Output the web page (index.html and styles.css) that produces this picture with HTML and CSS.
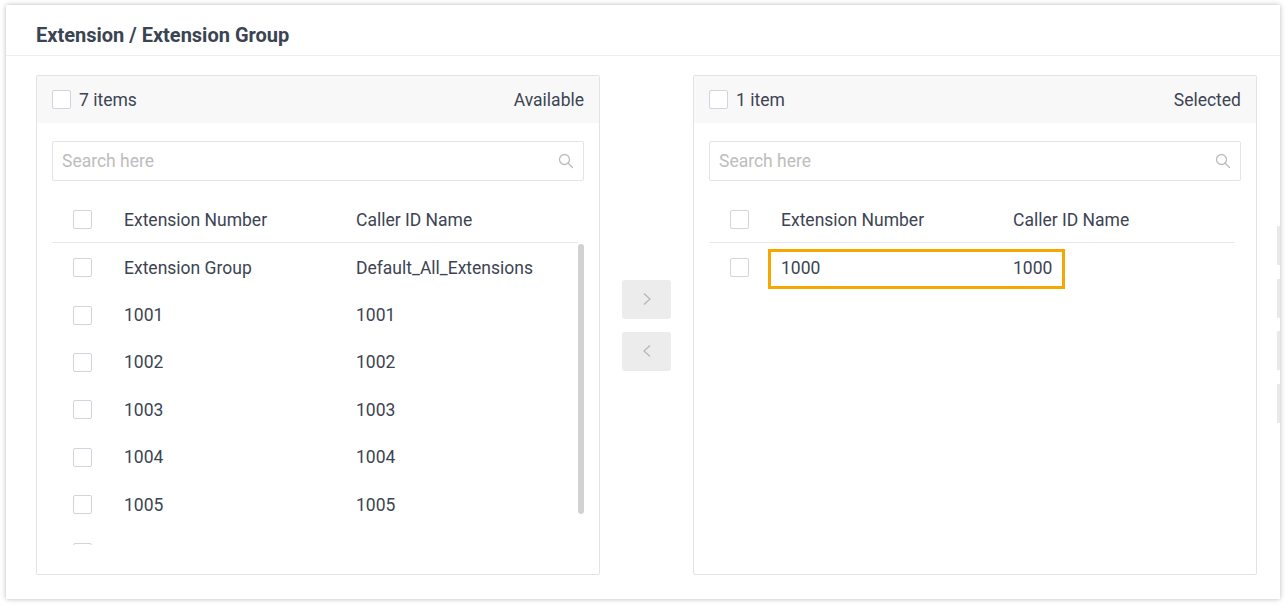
FILE: index.html
```html
<!DOCTYPE html>
<html>
<head>
<meta charset="utf-8">
<link rel="stylesheet" href="styles.css">
</head>
<body>
<div class="card">
  <div class="card-head">Extension / Extension Group</div>
  <div class="card-body">
    <div class="panel">
      <div class="panel-head">
        <span class="cb"></span><span class="count">7 items</span><span class="spacer"></span><span>Available</span>
      </div>
      <div class="search"><span class="ph">Search here</span>
        <svg class="sicon" width="16" height="16" viewBox="0 0 16 16"><circle cx="6.5" cy="6.5" r="5" fill="none" stroke="#bdbdbd" stroke-width="1.3"/><path d="M10.2 10.2 L14.5 14.5" stroke="#bdbdbd" stroke-width="1.3" stroke-linecap="round"/></svg>
      </div>
      <div class="table">
        <div class="thead"><span class="cell-cb"><span class="cb"></span></span><span class="c1">Extension Number</span><span class="c2">Caller ID Name</span></div>
        <div class="tbody">
          <div class="rows">
            <div class="row"><span class="cell-cb"><span class="cb"></span></span><span class="c1">Extension Group</span><span class="c2">Default_All_Extensions</span></div>
            <div class="row"><span class="cell-cb"><span class="cb"></span></span><span class="c1">1001</span><span class="c2">1001</span></div>
            <div class="row"><span class="cell-cb"><span class="cb"></span></span><span class="c1">1002</span><span class="c2">1002</span></div>
            <div class="row"><span class="cell-cb"><span class="cb"></span></span><span class="c1">1003</span><span class="c2">1003</span></div>
            <div class="row"><span class="cell-cb"><span class="cb"></span></span><span class="c1">1004</span><span class="c2">1004</span></div>
            <div class="row"><span class="cell-cb"><span class="cb"></span></span><span class="c1">1005</span><span class="c2">1005</span></div>
            <div class="row"><span class="cell-cb"><span class="cb"></span></span></div>
          </div>
          <div class="track"><div class="thumb"></div></div>
        </div>
      </div>
    </div>
    <div class="ops">
      <div class="btn"><svg width="10" height="14" viewBox="0 0 10 14"><path d="M2 1.5 L8 7 L2 12.5" fill="none" stroke="#b5b5b5" stroke-width="1.2"/></svg></div>
      <div class="btn"><svg width="10" height="14" viewBox="0 0 10 14"><path d="M8 1.5 L2 7 L8 12.5" fill="none" stroke="#b5b5b5" stroke-width="1.2"/></svg></div>
    </div>
    <div class="panel">
      <div class="panel-head">
        <span class="cb"></span><span class="count">1 item</span><span class="spacer"></span><span>Selected</span>
      </div>
      <div class="search"><span class="ph">Search here</span>
        <svg class="sicon" width="16" height="16" viewBox="0 0 16 16"><circle cx="6.5" cy="6.5" r="5" fill="none" stroke="#bdbdbd" stroke-width="1.3"/><path d="M10.2 10.2 L14.5 14.5" stroke="#bdbdbd" stroke-width="1.3" stroke-linecap="round"/></svg>
      </div>
      <div class="table">
        <div class="thead"><span class="cell-cb"><span class="cb"></span></span><span class="c1">Extension Number</span><span class="c2">Caller ID Name</span></div>
        <div class="tbody">
          <div class="rows">
            <div class="row hl-row"><span class="cell-cb"><span class="cb"></span></span><span class="c1">1000</span><span class="c2">1000</span><span class="highlight"></span></div>
          </div>
          <div class="track"></div>
        </div>
      </div>
    </div>
  </div>
  <div class="edge">
    <span class="edge-bar b1"></span>
    <span class="edge-bar b2"></span>
    <span class="edge-bar b3"></span>
    <span class="edge-bar b4"></span>
  </div>
</div>
</body>
</html>
```
FILE: styles.css
```css
* { box-sizing: border-box; }
html, body { margin: 0; padding: 0; background: #ffffff; }
body {
  font-family: Roboto, "Liberation Sans", Arial, sans-serif;
  color: #3c4453;
  width: 1286px;
  height: 606px;
  overflow: hidden;
  padding: 5px 6px 0 6px;
}
.card {
  position: relative;
  width: 1274px;
  height: 594px;
  background: #fff;
  box-shadow: 0 0 5px rgba(0,0,0,0.28);
}
.card-head {
  height: 51px;
  padding: 18px 0 0 30px;
  font-size: 20px;
  font-weight: 700;
  color: #3a4453;
  border-bottom: 1px solid #eeeeee;
  line-height: 24px;
}
.card-body {
  display: flex;
  align-items: center;
  padding: 19px 23px 0 30px;
}
.panel {
  width: 564px;
  height: 500px;
  border: 1px solid #e3e3e3;
  border-radius: 2px;
  display: flex;
  flex-direction: column;
}
.panel-head {
  height: 47px;
  background: #f8f8f8;
  display: flex;
  align-items: center;
  padding: 0 15px;
  font-size: 17.5px;
  color: #3c4453;
}
.panel-head .count { margin-left: 8px; }
.spacer { flex: 1; }
.cb {
  display: inline-block;
  width: 19px;
  height: 19px;
  border: 1px solid #d3d3de;
  border-radius: 2px;
  background: #fff;
}
.search {
  margin: 18px 15px 0 15px;
  height: 40px;
  border: 1px solid #e4e4e8;
  border-radius: 2px;
  display: flex;
  align-items: center;
  padding: 0 10px 0 9px;
  font-size: 17.5px;
}
.search .ph { flex: 1; color: #bdbdbd; }
.sicon { margin-right: -1px; }
.table {
  margin: 14px 15px 0 15px;
  flex: 1;
  display: flex;
  flex-direction: column;
  min-height: 0;
}
.thead {
  height: 48px;
  padding-top: 2px;
  display: flex;
  align-items: center;
  border-bottom: 1px solid #e6e8ee;
  width: 526px;
  font-size: 17.5px;
  color: #3c4453;
}
.cell-cb { width: 72px; padding-left: 21px; display: flex; align-items: center; }
.c1 { width: 232px; }
.c2 { flex: 1; }
.tbody {
  display: flex;
  height: 302px;
  overflow: hidden;
}
.rows { width: 526px; padding-top: 1px; }
.row {
  position: relative;
  height: 47.4px;
  display: flex;
  align-items: center;
  font-size: 17.5px;
  color: #3c4453;
}
.track { width: 6px; padding-top: 0; }
.thumb {
  width: 6px;
  height: 270px;
  margin-top: 1px;
  background: #d2d2d2;
  border-radius: 3px;
}
.highlight {
  position: absolute;
  left: 59px;
  top: 5px;
  width: 297px;
  height: 40px;
  border: 3px solid #f7a800;
}
.ops {
  width: 93px;
  display: flex;
  flex-direction: column;
  align-items: center;
  gap: 13px;
}
.btn {
  width: 49px;
  height: 39px;
  background: #ececec;
  border-radius: 3px;
  display: flex;
  align-items: center;
  justify-content: center;
}
.edge {
  position: absolute;
  right: 0;
  top: 0;
  width: 3px;
  height: 100%;
}
.edge-bar {
  position: absolute;
  left: 0;
  width: 3px;
  height: 39px;
  background: #e9e9e9;
}
.b1 { top: 221px; }
.b2 { top: 274px; }
.b3 { top: 326px; }
.b4 { top: 379px; }
```
